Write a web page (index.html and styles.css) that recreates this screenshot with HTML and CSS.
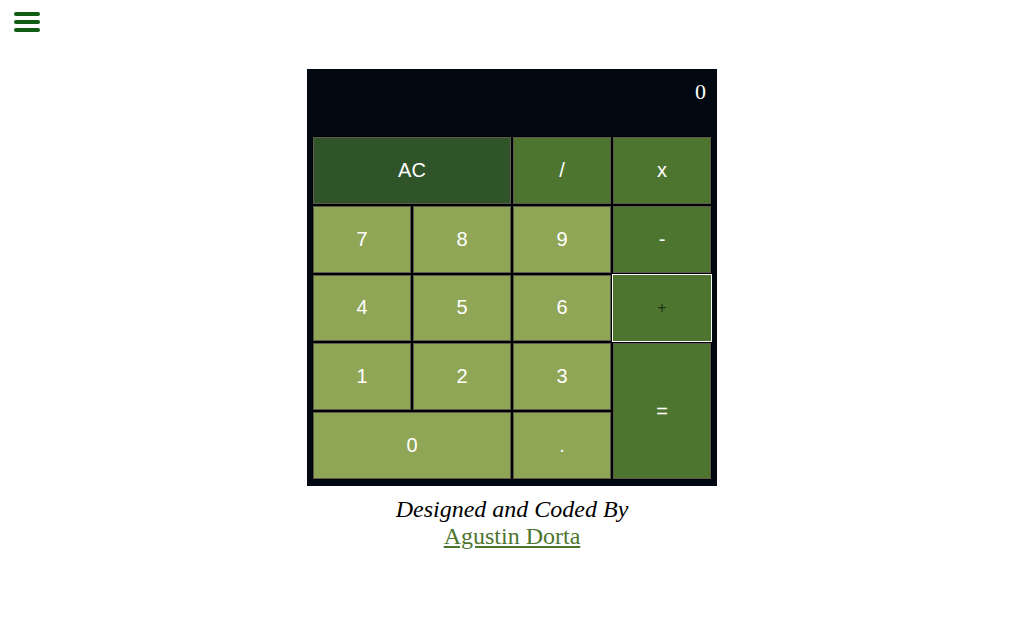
FILE: index.html
```html
<!DOCTYPE html>
<html>
<head>
<meta charset="utf-8">
<link rel="stylesheet" href="styles.css">
</head>
<body>
<header class="top">
  <svg class="burger" width="28" height="22" viewBox="0 0 28 22">
    <line x1="3" y1="3" x2="25" y2="3"/>
    <line x1="3" y1="11" x2="25" y2="11"/>
    <line x1="3" y1="19" x2="25" y2="19"/>
  </svg>
</header>
<main class="calc">
  <div class="display">0</div>
  <div class="keys">
    <button class="key clear wide">AC</button>
    <button class="key op">/</button>
    <button class="key op">x</button>
    <button class="key num">7</button>
    <button class="key num">8</button>
    <button class="key num">9</button>
    <button class="key op">-</button>
    <button class="key num">4</button>
    <button class="key num">5</button>
    <button class="key num">6</button>
    <button class="key op focus">+</button>
    <button class="key num">1</button>
    <button class="key num">2</button>
    <button class="key num">3</button>
    <button class="key op tall">=</button>
    <button class="key num wide">0</button>
    <button class="key num">.</button>
  </div>
</main>
<footer class="credit">
  <div class="by">Designed and Coded By</div>
  <a class="author" href="#">Agustin Dorta</a>
</footer>
</body>
</html>
```
FILE: styles.css
```css
html, body {
  margin: 0;
  padding: 0;
  background: #ffffff;
}
.top {
  height: 69px;
  padding: 11px 0 0 13px;
  box-sizing: border-box;
}
.burger {
  display: block;
}
.burger line {
  stroke: #0f5c12;
  stroke-width: 4;
  stroke-linecap: round;
}
.calc {
  width: 410px;
  margin: 0 auto;
  background: #020812;
  padding: 0 5px 6px 5px;
  box-sizing: border-box;
}
.display {
  height: 67px;
  color: #ffffff;
  font-family: "Liberation Serif", "Times New Roman", serif;
  font-size: 22px;
  text-align: right;
  padding: 10px 6px 0 0;
  box-sizing: border-box;
}
.keys {
  display: grid;
  grid-template-columns: repeat(4, 100px);
  grid-auto-rows: 68.8px;
}
.key {
  margin: 0;
  border: 1px solid #000;
  box-shadow: inset 0 0 0 1px #5b5b4f;
  color: #ffffff;
  font-family: "Liberation Sans", Arial, sans-serif;
  font-size: 20px;
  padding: 0;
  cursor: pointer;
}
.num { background: #8fa657; }
.op { background: #4e7530; }
.clear { background: #2f5429; }
.wide { grid-column: span 2; }
.tall { grid-row: span 2; }
.focus {
  border: 1px solid #ffffff;
  box-shadow: none;
  color: #1f3315;
  font-size: 16px;
}
.credit {
  text-align: center;
  font-family: "Liberation Serif", "Times New Roman", serif;
  font-size: 24px;
  margin-top: 10px;
  line-height: 27px;
}
.by {
  font-style: italic;
  color: #000;
}
.author {
  color: #4e7530;
}
```
